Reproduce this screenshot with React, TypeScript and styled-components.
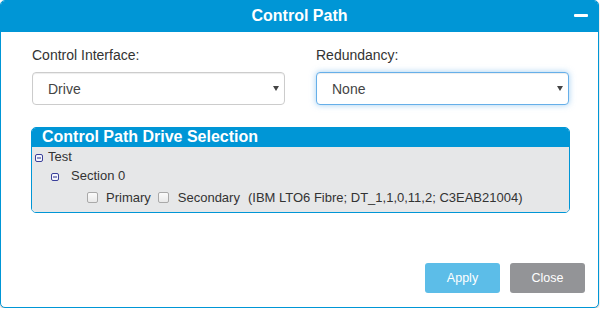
import styled, { createGlobalStyle } from "styled-components";

const GlobalStyle = createGlobalStyle`
  body {
    margin: 0;
    background: #ffffff;
    font-family: "Liberation Sans", Arial, sans-serif;
  }
`;

const MinusIcon = () => (
  <svg width="8" height="8" viewBox="0 0 8 8">
    <rect x="0.5" y="0.5" width="7" height="7" rx="1.5" fill="#f4f5fb" stroke="#3a3f9a" strokeWidth="1" />
    <line x1="2" y1="4" x2="6" y2="4" stroke="#2b3190" strokeWidth="1.2" />
  </svg>
);

const App = () => {
  return (
    <>
      <GlobalStyle />
      <Modal>
        <Header>
          <span />
          <Title>Control Path</Title>
          <Minimize aria-label="minimize" />
        </Header>

        <Body>
          <FieldRow>
            <Field>
              <Label>Control Interface:</Label>
              <SelectWrap>
                <Select defaultValue="Drive">
                  <option>Drive</option>
                  <option>Library</option>
                </Select>
              </SelectWrap>
            </Field>
            <Field>
              <Label>Redundancy:</Label>
              <SelectWrap>
                <Select defaultValue="None" $focused>
                  <option>None</option>
                  <option>Path Failover</option>
                </Select>
              </SelectWrap>
            </Field>
          </FieldRow>

          <Panel>
            <PanelHeader>Control Path Drive Selection</PanelHeader>
            <PanelBody>
              <TreeRow $indent={3} $height={19}>
                <TreeToggle>
                  <MinusIcon />
                </TreeToggle>
                <TreeText $gap={5}>Test</TreeText>
              </TreeRow>
              <TreeRow $indent={19} $height={19}>
                <TreeToggle>
                  <MinusIcon />
                </TreeToggle>
                <TreeText $gap={12}>Section 0</TreeText>
              </TreeRow>
              <TreeRow $indent={55} $height={25}>
                <Check type="checkbox" />
                <TreeText $gap={8}>Primary</TreeText>
                <Check type="checkbox" $gap={7} />
                <TreeText $gap={9}>Secondary</TreeText>
                <TreeText $gap={8}>(IBM LTO6 Fibre; DT_1,1,0,11,2; C3EAB21004)</TreeText>
              </TreeRow>
            </PanelBody>
          </Panel>

          <Footer>
            <Button $color="#5cbde8">Apply</Button>
            <Button $color="#939497">Close</Button>
          </Footer>
        </Body>
      </Modal>
    </>
  );
};

export default App;

const Modal = styled.div`
  box-sizing: border-box;
  width: 599px;
  height: 308px;
  border: 1px solid #0096d6;
  border-radius: 5px;
  overflow: hidden;
  display: flex;
  flex-direction: column;
  background: #ffffff;
  box-shadow: 0 1px 2px rgba(0, 0, 0, 0.25);
`;

const Header = styled.div`
  height: 31px;
  background: #0096d6;
  display: grid;
  grid-template-columns: 1fr auto 1fr;
  align-items: center;
`;

const Title = styled.h3`
  margin: 0 0 2px 0;
  color: #ffffff;
  font-size: 16px;
  font-weight: bold;
  line-height: 29px;
`;

const Minimize = styled.span`
  justify-self: end;
  width: 14px;
  height: 3px;
  margin-right: 10px;
  margin-bottom: 2px;
  border-radius: 1px;
  background: #ffffff;
`;

const Body = styled.div`
  flex: 1;
  display: flex;
  flex-direction: column;
  padding: 13px 29px 14px 31px;
`;

const FieldRow = styled.div`
  display: grid;
  grid-template-columns: 1fr 1fr;
  column-gap: 31px;
`;

const Field = styled.div`
  display: flex;
  flex-direction: column;
`;

const Label = styled.label`
  font-size: 14px;
  line-height: 20px;
  color: #333333;
  margin-bottom: 7px;
`;

const SelectWrap = styled.div`
  position: relative;

  &::after {
    content: "";
    position: absolute;
    right: 6px;
    top: 14px;
    border-left: 3px solid transparent;
    border-right: 3px solid transparent;
    border-top: 5px solid #444444;
    pointer-events: none;
  }
`;

const Select = styled.select<{ $focused?: boolean }>`
  appearance: none;
  -webkit-appearance: none;
  box-sizing: border-box;
  width: 100%;
  height: 33px;
  padding: 0 20px 0 15px;
  border: 1px solid ${(p) => (p.$focused ? "#66afe9" : "#cccccc")};
  border-radius: 4px;
  background: #ffffff;
  color: #444444;
  font-family: "Liberation Sans", Arial, sans-serif;
  font-size: 14px;
  outline: none;
  box-shadow: ${(p) =>
    p.$focused
      ? "inset 0 1px 1px rgba(0,0,0,.075), 0 0 6px rgba(102,175,233,.6)"
      : "inset 0 1px 1px rgba(0,0,0,.075)"};
`;

const Panel = styled.div`
  margin: 22px -1px 0 -1px;
  border: 1px solid #0096d6;
  border-radius: 5px;
  overflow: hidden;
`;

const PanelHeader = styled.div`
  height: 19px;
  background: #0096d6;
  color: #ffffff;
  font-size: 16px;
  font-weight: bold;
  line-height: 17px;
  padding-left: 10px;
`;

const PanelBody = styled.div`
  background: #e6e7e8;
  padding: 0 0 2px 0;
`;

const TreeRow = styled.div<{ $indent: number; $height: number }>`
  display: flex;
  align-items: center;
  height: ${(p) => p.$height}px;
  padding-left: ${(p) => p.$indent}px;
  font-size: 13px;
  color: #333333;
`;

const TreeToggle = styled.span`
  display: flex;
  margin-top: 3px;
`;

const TreeText = styled.span<{ $gap: number }>`
  margin-left: ${(p) => p.$gap}px;
  white-space: pre;
`;

const Check = styled.input<{ $gap?: number }>`
  appearance: none;
  -webkit-appearance: none;
  box-sizing: border-box;
  width: 11px;
  height: 11px;
  margin: 0 0 0 ${(p) => p.$gap ?? 0}px;
  border: 1px solid #a9a9a9;
  border-radius: 2px;
  background: linear-gradient(#fbfbfb, #e9e9e9);
`;

const Footer = styled.div`
  margin-top: auto;
  display: flex;
  justify-content: flex-end;
  gap: 10px;
  margin-right: -16px;
`;

const Button = styled.button<{ $color: string }>`
  width: 75px;
  height: 30px;
  border: none;
  border-radius: 3px;
  background: ${(p) => p.$color};
  color: #ffffff;
  font-family: "Liberation Sans", Arial, sans-serif;
  font-size: 12.5px;
  cursor: pointer;
`;
